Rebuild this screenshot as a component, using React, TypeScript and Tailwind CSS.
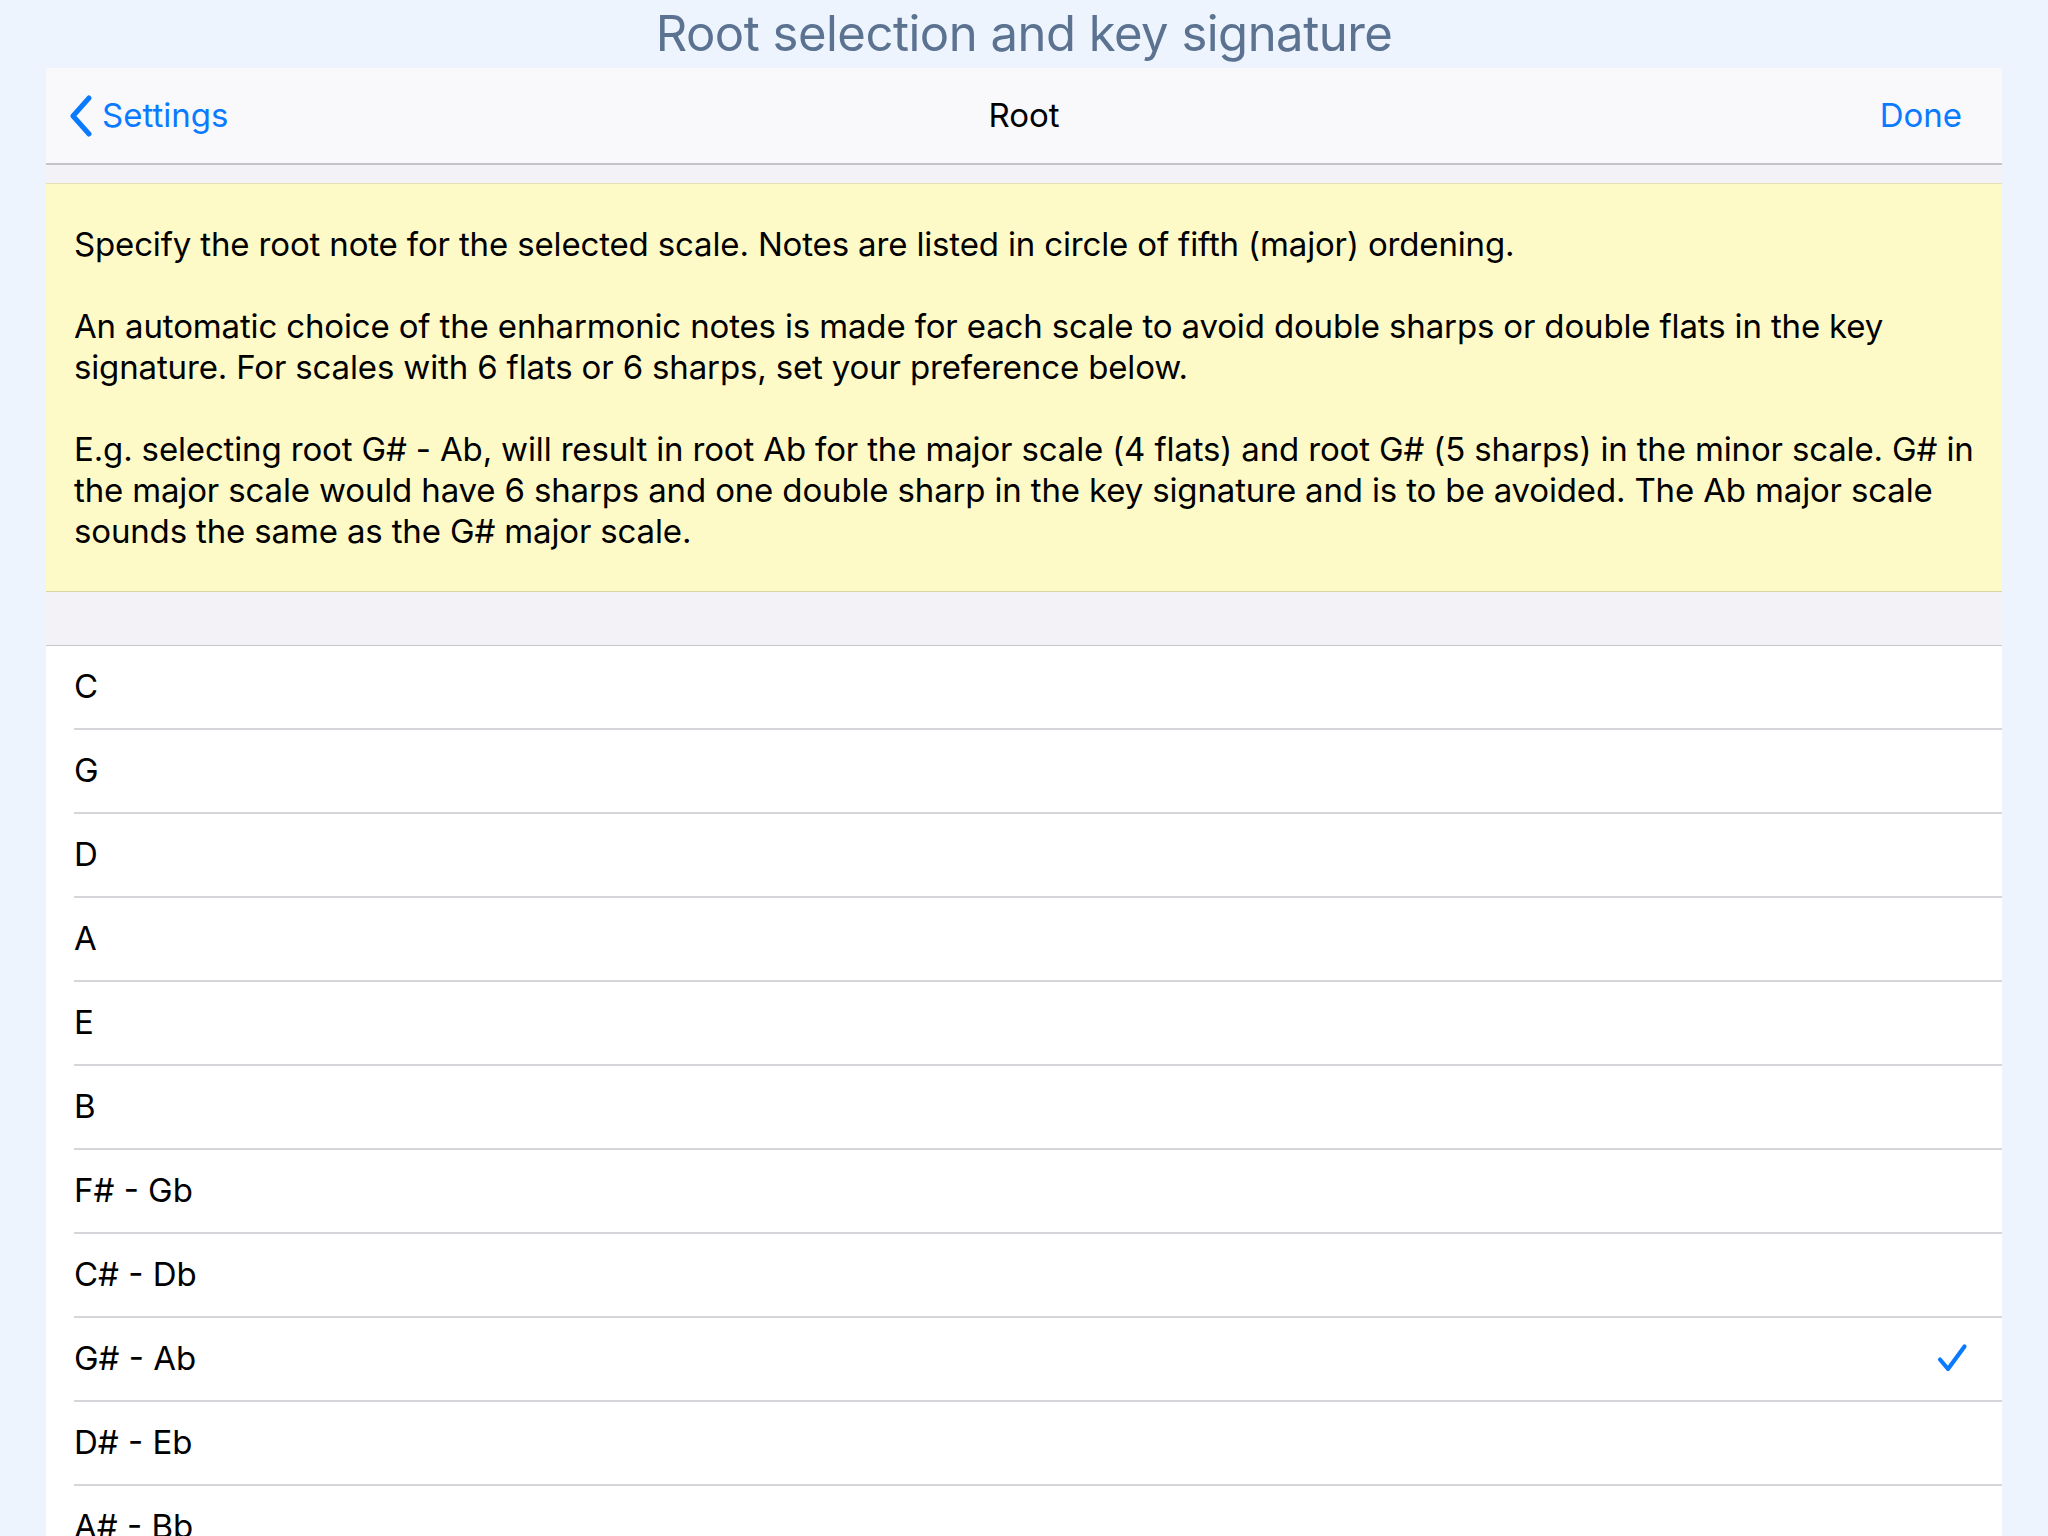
const notes = [
  "C",
  "G",
  "D",
  "A",
  "E",
  "B",
  "F# - Gb",
  "C# - Db",
  "G# - Ab",
  "D# - Eb",
  "A# - Bb",
  "F",
];

const selected = "G# - Ab";

const Check = () => (
  <svg width="32" height="32" viewBox="0 0 32 32" fill="none">
    <path
      d="M4 16.5 L12 26 L28.5 3.5"
      stroke="#0a7aff"
      strokeWidth="4.2"
      strokeLinecap="round"
      strokeLinejoin="round"
    />
  </svg>
);

const BackChevron = () => (
  <svg width="26" height="42" viewBox="0 0 26 42" fill="none">
    <path
      d="M21 3 L5 21 L21 39"
      stroke="#0a7aff"
      strokeWidth="5"
      strokeLinecap="round"
      strokeLinejoin="round"
    />
  </svg>
);

const App = () => {
  return (
    <div
      className="h-screen overflow-hidden bg-[#edf4fe] flex flex-col"
      style={{ fontFamily: "Inter, 'Noto Sans', sans-serif" }}
    >
      <h1 className="h-[68px] flex items-center justify-center text-[49px] text-[#5b7291] tracking-[-0.5px]">
        Root selection and key signature
      </h1>

      <div className="mx-[46px] flex flex-col bg-white">
        {/* nav bar */}
        <div className="h-[97px] bg-[#f9f9fb] border-b-2 border-[#c4c4c8] flex items-center justify-between pl-[22px] pr-[40px] relative">
          <button className="flex items-center gap-[8px] text-[#0a7aff] text-[33px]">
            <BackChevron />
            <span>Settings</span>
          </button>
          <span className="absolute left-1/2 -translate-x-1/2 text-[33px] text-black">Root</span>
          <button className="text-[#0a7aff] text-[33px]">Done</button>
        </div>

        <div className="h-[19px] bg-[#f2f2f7] border-b border-[#e3e0b8]" />

        {/* info box */}
        <div className="bg-[#fefac8] border-b border-[#d9d4a2] px-[28px] pt-[40px] pb-[39px] text-[33px] leading-[41px] text-black tracking-[-0.15px]">
          <p>Specify the root note for the selected scale. Notes are listed in circle of fifth (major) ordening.</p>
          <p className="mt-[41px]">
            An automatic choice of the enharmonic notes is made for each scale to avoid double sharps or double flats in the key
            <br />
            signature. For scales with 6 flats or 6 sharps, set your preference below.
          </p>
          <p className="mt-[41px]">
            E.g. selecting root G# - Ab, will result in root Ab for the major scale (4 flats) and root G# (5 sharps) in the minor scale. G# in
            <br />
            the major scale would have 6 sharps and one double sharp in the key signature and is to be avoided. The Ab major scale
            <br />
            sounds the same as the G# major scale.
          </p>
        </div>

        <div className="h-[54px] bg-[#f2f2f7] border-b border-[#c8c7cc]" />

        {/* list */}
        <ul className="bg-white">
          {notes.map((n) => (
            <li key={n} className="pl-[28px]">
              <div className="h-[84px] border-b-2 border-[#d6d6da] flex items-center justify-between pr-[34px]">
                <span className="text-[33px] text-black">{n}</span>
                {n === selected && <Check />}
              </div>
            </li>
          ))}
        </ul>
      </div>
    </div>
  );
};

export default App;
